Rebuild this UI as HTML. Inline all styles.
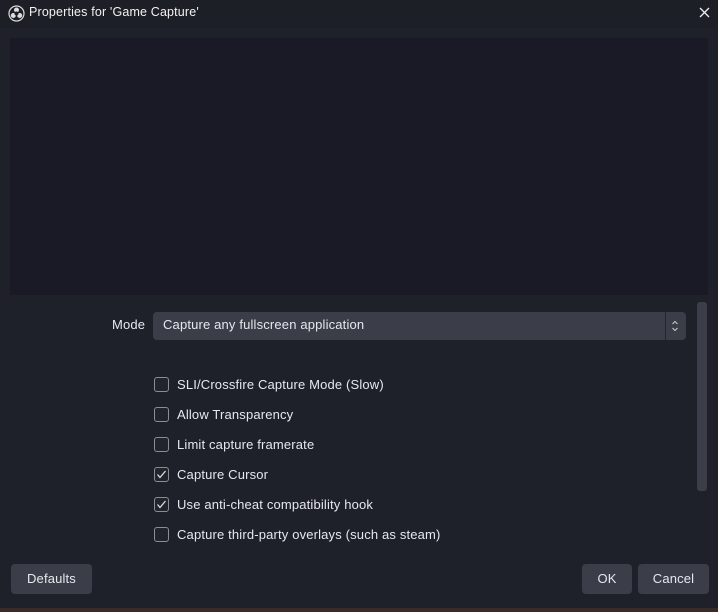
<!DOCTYPE html>
<html><head><meta charset="utf-8"><style>
*{margin:0;padding:0;box-sizing:border-box}
body{width:718px;height:612px;background:#3a2a28;overflow:hidden;font-family:"Liberation Sans",sans-serif;color:#e6e8ee;font-size:13px;letter-spacing:0.16px;position:relative}
.win{position:absolute;left:0;top:0;width:718px;height:608px;background:#1f212a}
.title{position:absolute;left:0;top:0;width:718px;height:28px;background:#1c1f26}
.title span{position:absolute;left:29px;top:5px;font-size:12.5px;color:#f2f2f2}
.prev{position:absolute;left:10px;top:38px;width:698px;height:257px;background:#191a25}
.abs{position:absolute}
.combo{left:153px;top:312px;width:533px;height:28px;background:#3b3e49;border-radius:4px}
.combo span{position:absolute;left:10px;top:6px}
.combo .div{position:absolute;left:512px;top:0;width:1px;height:28px;background:#23252d}
.sb{left:697px;top:302px;width:10px;height:189px;background:#3b3e49;border-radius:3px}
.cb{position:absolute;left:154px;width:15px;height:15px;border:1px solid #8a8d96;border-radius:3px;background:#22242c}
.lbl{position:absolute;left:177px}
.btn{position:absolute;top:564px;height:30px;background:#3b3e49;border-radius:4px;text-align:center;line-height:30px}
</style></head><body>
<div class="win">
 <div class="title">
  <svg class="abs" style="left:8px;top:5px" width="17" height="17" viewBox="0 0 17 17"><circle cx="8.5" cy="8.5" r="7.5" fill="none" stroke="#ddd" stroke-width="1.2"/><circle cx="8.5" cy="5" r="2.5" fill="#ddd"/><circle cx="5.3" cy="10.5" r="2.5" fill="#ddd"/><circle cx="11.7" cy="10.5" r="2.5" fill="#ddd"/><circle cx="8.5" cy="8.5" r="2" fill="#1c1f26"/></svg>
  <span>Properties for 'Game Capture'</span>
  <svg class="abs" style="left:699px;top:7px" width="11" height="11" viewBox="0 0 11 11"><path d="M1 1L10 10M10 1L1 10" stroke="#eee" stroke-width="1.3"/></svg>
 </div>
 <div class="prev"></div>
 <div class="abs" style="left:112px;top:317px">Mode</div>
 <div class="abs combo"><span style="top:5px">Capture any fullscreen application</span><div class="div"></div>
  <svg class="abs" style="left:518px;top:7px" width="8" height="14" viewBox="0 0 8 14"><path d="M1.5 5L4 2.5L6.5 5M1.5 9L4 11.5L6.5 9" fill="none" stroke="#ccc" stroke-width="1"/></svg></div>
 <div class="abs sb"></div>

 <div class="cb" style="top:377px"></div><div class="lbl" style="top:377px">SLI/Crossfire Capture Mode (Slow)</div>
 <div class="cb" style="top:407px"></div><div class="lbl" style="top:407px">Allow Transparency</div>
 <div class="cb" style="top:437px"></div><div class="lbl" style="top:437px">Limit capture framerate</div>
 <div class="cb" style="top:467px"><svg width="13" height="13" viewBox="0 0 13 13"><path d="M2.5 6.5L5 9.5L10.5 3" fill="none" stroke="#ddd" stroke-width="1.3"/></svg></div><div class="lbl" style="top:467px">Capture Cursor</div>
 <div class="cb" style="top:497px"><svg width="13" height="13" viewBox="0 0 13 13"><path d="M2.5 6.5L5 9.5L10.5 3" fill="none" stroke="#ddd" stroke-width="1.3"/></svg></div><div class="lbl" style="top:497px">Use anti-cheat compatibility hook</div>
 <div class="cb" style="top:527px"></div><div class="lbl" style="top:527px">Capture third-party overlays (such as steam)</div>

 <div class="btn" style="left:11px;width:81px">Defaults</div>
 <div class="btn" style="left:582px;width:50px">OK</div>
 <div class="btn" style="left:638px;width:71px">Cancel</div>
</div>
</body></html>
